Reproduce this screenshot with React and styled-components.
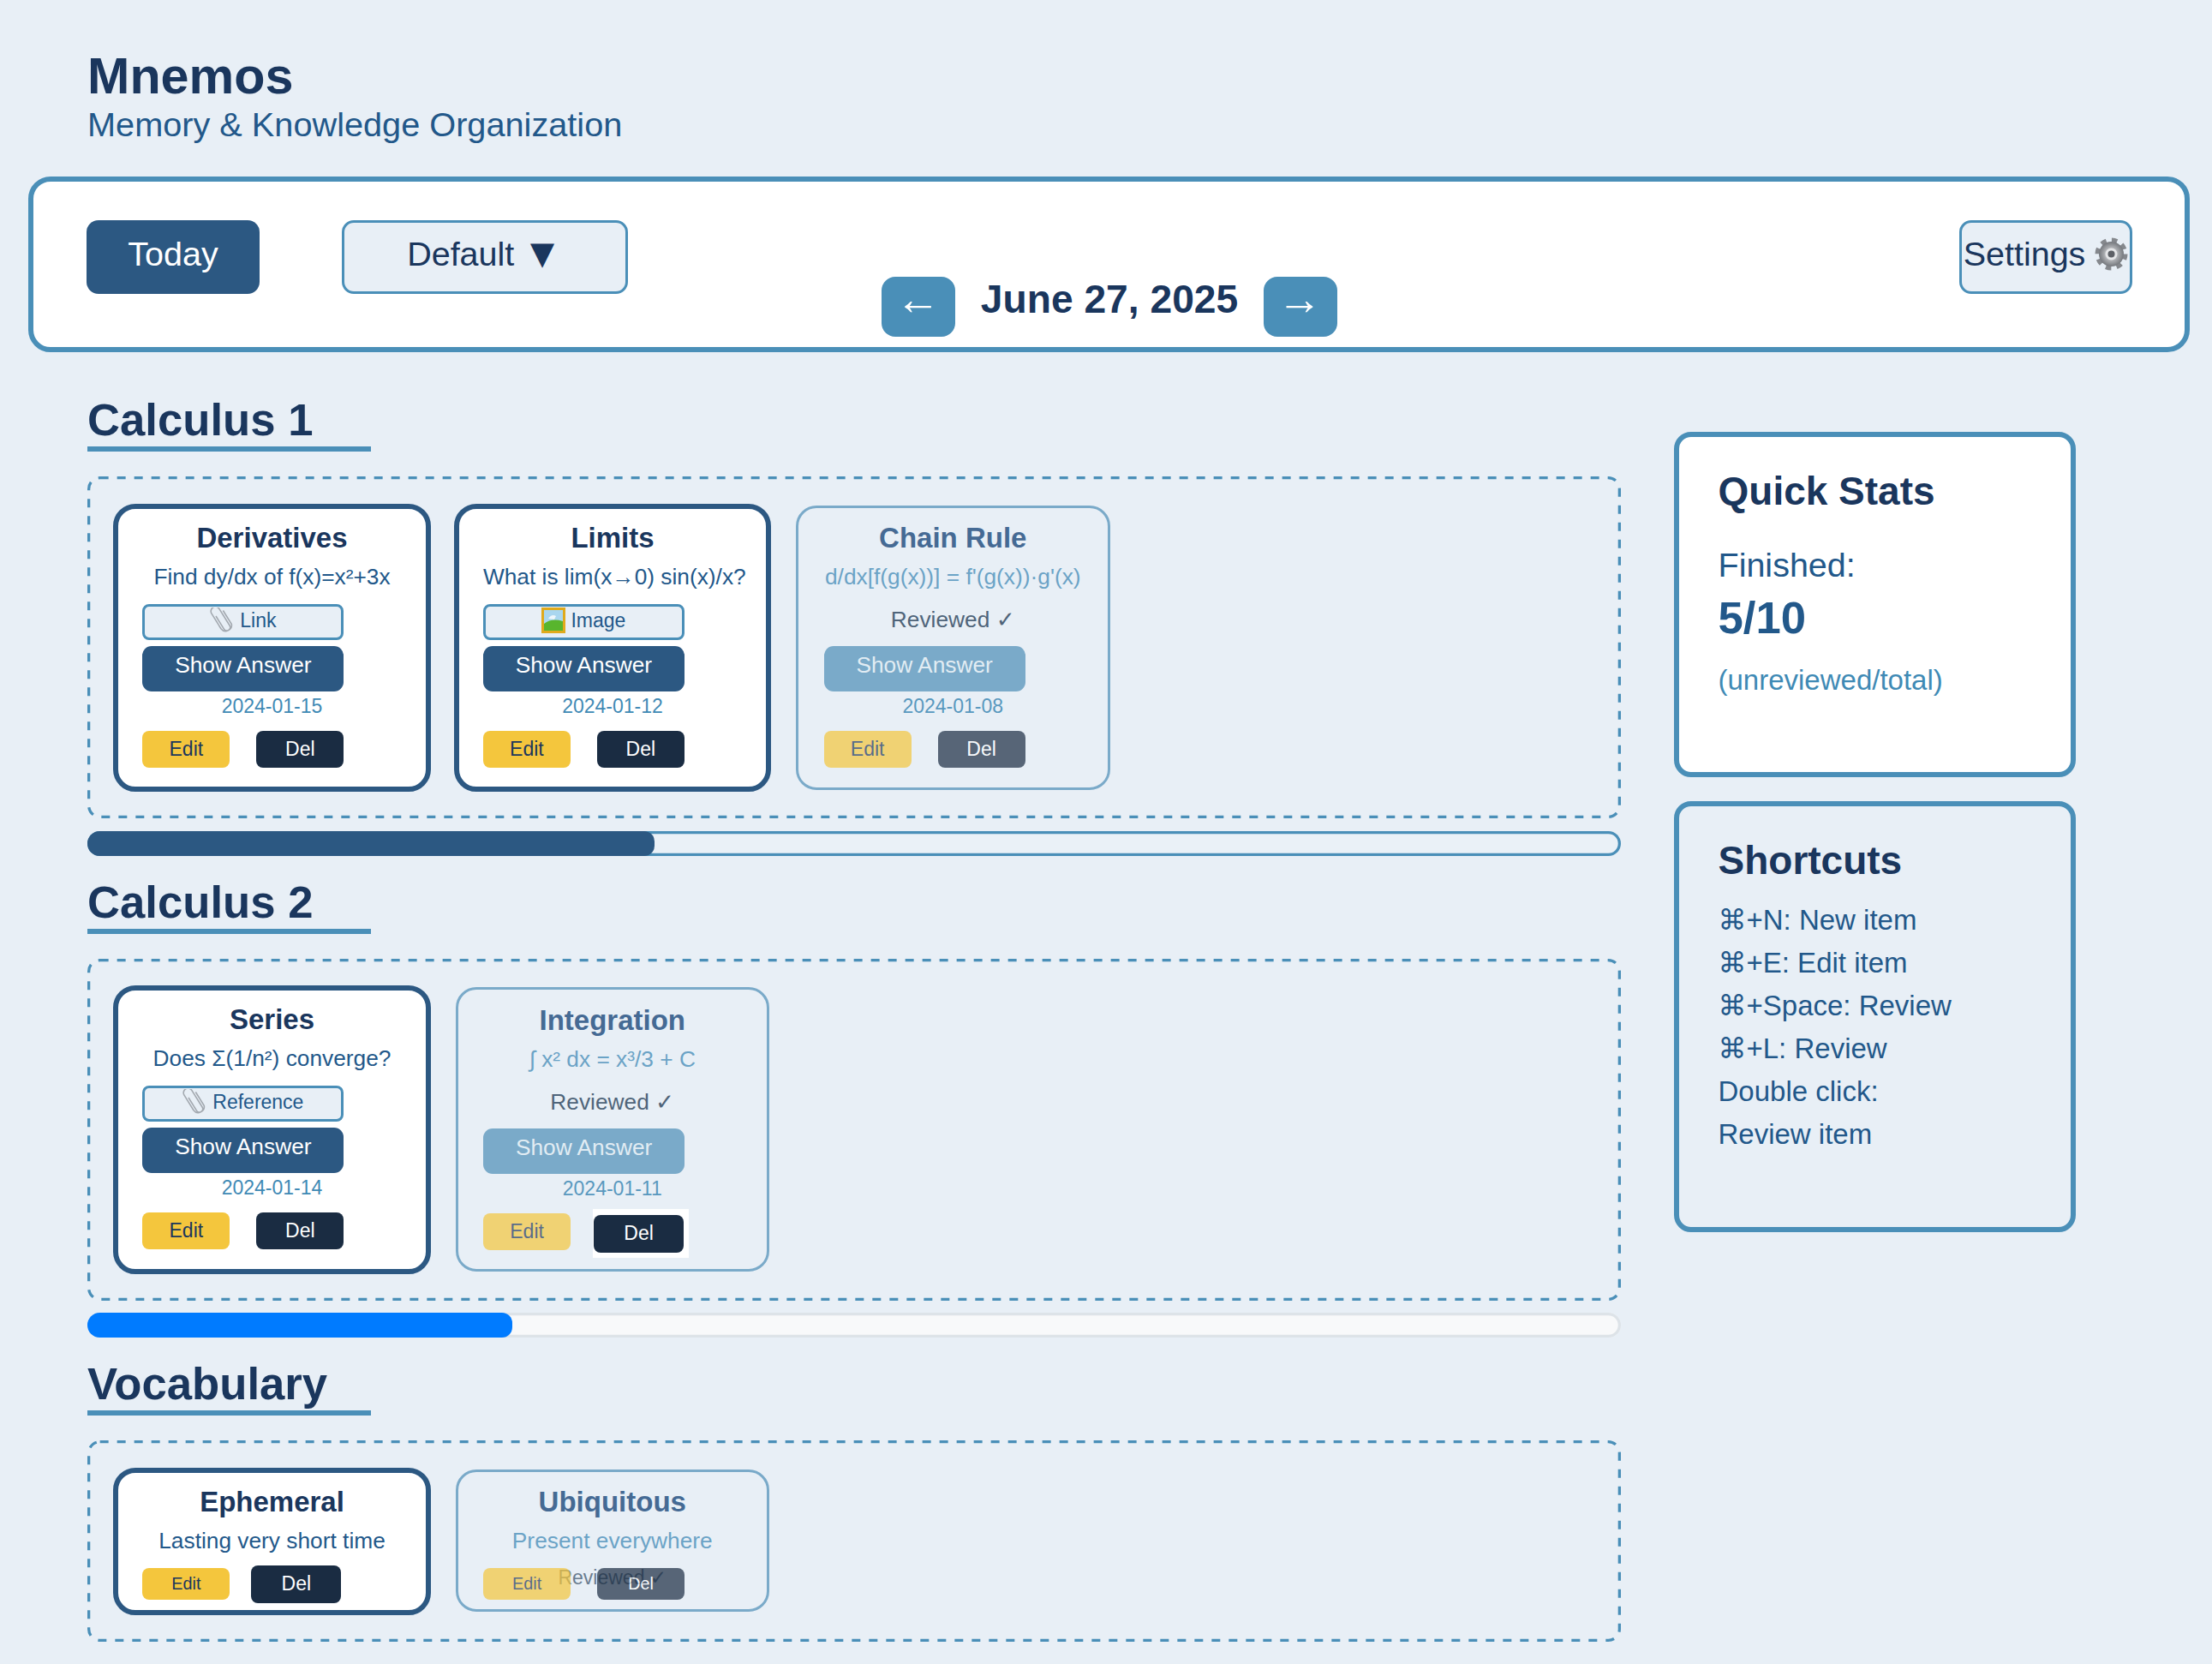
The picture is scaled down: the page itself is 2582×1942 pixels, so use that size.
import React from 'react';
import styled, { createGlobalStyle, css } from 'styled-components';

const GlobalStyle = createGlobalStyle`
  * { box-sizing: border-box; }
  html, body { margin: 0; padding: 0; background: #e8eff6; }
  body {
    font-family: "Liberation Sans", "DejaVu Sans", sans-serif;
    color: #1a365d;
  }
`;

const Page = styled.div`
  width: 2582px;
  height: 1942px;
  overflow: hidden;
  background: #e8eff6;
`;

const Header = styled.header`
  padding: 55px 0 0 102px;
`;
const Logo = styled.h1`
  margin: 0;
  font-size: 59.3px;
  line-height: 67px;
  font-weight: 700;
  color: #1a365d;
`;
const Tagline = styled.p`
  margin: 1px 0 38px;
  font-size: 39.7px;
  line-height: 45px;
  color: #22588a;
`;

const Toolbar = styled.nav`
  margin: 0 26px 0 33px;
  height: 205px;
  padding: 45px 61px 12px 62px;
  display: grid;
  grid-template-columns: 1fr auto 1fr;
  background: #fff;
  border: 6.6px solid #4a8fb8;
  border-radius: 26px;
`;
const ToolGroup = styled.div`
  display: flex;
  gap: 96px;
  align-items: flex-start;
  justify-content: ${p => (p.$end ? 'flex-end' : 'flex-start')};
`;
const ToolButton = styled.button`
  height: 86px;
  display: flex;
  align-items: center;
  justify-content: center;
  padding: 0 0 8px;
  font: inherit;
  font-size: 39.5px;
  border-radius: 14px;
`;
const TodayButton = styled(ToolButton)`
  width: 202px;
  color: #fff;
  background: #2c5882;
  border: 0;
`;
const OutlineButton = styled(ToolButton)`
  width: ${p => p.$width}px;
  gap: ${p => p.$gap || 0}px;
  color: #1a365d;
  background: #e8eff6;
  border: 3.3px solid #4a8fb8;
`;
const Caret = styled.span`
  margin-left: 9px;
  font-size: 48px;
  line-height: 1;
`;
const DateNav = styled.div`
  align-self: end;
  display: flex;
  align-items: flex-start;
  gap: 29.5px;
`;
const ArrowButton = styled.button`
  width: 86px;
  height: 70px;
  padding: 0 2px 20px 0;
  color: #fff;
  background: #4a8fb8;
  border: 0;
  border-radius: 16px;
  font: inherit;
  font-size: 52px;
  line-height: 1;
`;
const CurrentDate = styled.h2`
  margin: 0;
  font-size: 46.2px;
  line-height: 52px;
  font-weight: 700;
  color: #1a365d;
`;

const Layout = styled.div`
  display: flex;
  align-items: flex-start;
  gap: 62px;
  padding: 49px 0 0 102px;
`;
const Main = styled.main`
  width: 1790px;
  flex: none;
`;
const Section = styled.section`
  margin-bottom: 24px;
`;
const SectionTitle = styled.h2`
  width: 331px;
  margin: 0 0 29px;
  padding-bottom: 2px;
  border-bottom: 6.6px solid #4a8fb8;
  font-size: 52.7px;
  line-height: 59px;
  font-weight: 700;
  white-space: nowrap;
  color: #1a365d;
`;
const CardBox = styled.div`
  position: relative;
  display: flex;
  align-items: flex-start;
  gap: 31.5px;
  padding: 33.5px 32px 0;
  min-height: ${p => p.$minHeight}px;
`;
const DashFrame = styled.svg`
  position: absolute;
  inset: 0;
  width: 100%;
  height: 100%;
  pointer-events: none;
  rect {
    x: 1.65px;
    y: 1.65px;
    width: calc(100% - 3.3px);
    height: calc(100% - 3.3px);
    fill: none;
    stroke: #4a8fb8;
    stroke-width: 3.3px;
    stroke-dasharray: 10 10;
  }
`;

const CardTitle = styled.h3`
  margin: 0 0 11px;
  font-size: 33px;
  line-height: 38px;
  font-weight: 700;
  text-align: center;
  color: #1a365d;
`;
const Prompt = styled.p`
  margin: 0;
  font-size: 26.3px;
  line-height: 30px;
  text-align: center;
  white-space: nowrap;
  color: #22588a;
`;
const Attachment = styled.div`
  width: 235px;
  height: 42px;
  margin: 17px 0 7px;
  padding-bottom: 3px;
  display: flex;
  align-items: center;
  justify-content: center;
  gap: 6px;
  font-size: 23px;
  color: #22588a;
  background: #e8eff6;
  border: 3.3px solid #4a8fb8;
  border-radius: 8px;
`;
const ReviewedNote = styled.div`
  height: 42px;
  margin: 17px 0 7px;
  font-size: 26.3px;
  line-height: 36px;
  text-align: center;
  color: #3f566d;
`;
const FloatingNote = styled.div`
  position: absolute;
  left: 0;
  right: 0;
  top: 108px;
  font-size: 23px;
  line-height: 30px;
  text-align: center;
  color: #3f566d;
  opacity: 0.75;
`;
const ShowAnswer = styled.button`
  display: block;
  width: 235px;
  height: 53px;
  padding: 0 0 8px;
  font: inherit;
  font-size: 26.3px;
  color: #fff;
  background: #2c5882;
  border: 0;
  border-radius: 11px;
`;
const CreatedOn = styled.div`
  font-size: 23px;
  line-height: 30px;
  margin-top: 2px;
  text-align: center;
  color: #3f8ab5;
`;
const Actions = styled.div`
  position: relative;
  z-index: 1;
  display: flex;
  align-items: flex-start;
  gap: ${p => (p.$tight ? 25 : 31)}px;
  margin-top: ${p => (p.$compact ? 17 : 14)}px;
`;
const ActionButton = styled.button`
  width: 102px;
  height: ${p => (p.$small ? 37 : 43)}px;
  padding: 0;
  font: inherit;
  font-size: ${p => (p.$small ? 19.8 : 23)}px;
  border: 0;
  border-radius: 8px;
`;
const EditButton = styled(ActionButton)`
  color: #1a365d;
  background: #f4c63d;
`;
const DelButton = styled(ActionButton)`
  color: #fff;
  background: #1a2c42;
  ${p => p.$raised && css`
    width: 105px;
    height: 44px;
    margin-top: ${p.$offset || 0}px;
  `}
`;
const HoverPatch = styled.div`
  width: 112px;
  height: 57px;
  margin: -5px 0 -9px -5px;
  padding: 7px 0 0 1px;
  background: #fff;
`;

const Card = styled.article`
  position: relative;
  flex: none;
  border-style: solid;
  ${p => p.$reviewed ? css`
    width: 366.5px;
    padding: 16.5px 29.6px ${p.$compact ? 11 : 22.7}px;
    border-width: 3.3px;
    border-color: #7aaac9;
    border-radius: 24px;
    background: transparent;
    ${CardTitle} { color: #456a94; }
    ${Prompt} { color: #6ba3c6; }
    ${ShowAnswer} { background: #7aaac9; color: rgba(255, 255, 255, 0.8); }
    ${CreatedOn} { opacity: 0.85; }
    ${ReviewedNote} { opacity: 0.9; }
    ${EditButton}, ${DelButton} { opacity: 0.7; }
    ${HoverPatch} ${DelButton} { opacity: 1; }
  ` : css`
    width: 370.3px;
    margin: -1.65px -2.65px -1.65px -1.65px;
    padding: 14.85px 28px ${p.$compact ? 8 : 22.7}px;
    border-width: 6.6px;
    border-color: #2c5882;
    border-radius: 26px;
    background: #fff;
  `}
`;

const Track = styled.div`
  height: 29px;
  margin-top: 14.5px;
  overflow: hidden;
  border-radius: 15px;
  box-shadow: inset 0 0 0 3.3px ${p => (p.$plain ? '#dde3e8' : '#4a8fb8')};
  background: ${p => (p.$plain ? '#f8f9fa' : '#eaf1f7')};
`;
const Fill = styled.div`
  width: ${p => p.$value}%;
  height: 100%;
  border-radius: 0 12px 12px 0;
  background: ${p => p.$color};
`;

const Sidebar = styled.aside`
  width: 469px;
  flex: none;
  margin-top: 44px;
  display: flex;
  flex-direction: column;
  gap: 28px;
`;
const Panel = styled.div`
  height: ${p => p.$height}px;
  padding: 36.5px 44px 0 45.5px;
  background: ${p => (p.$white ? '#fff' : 'transparent')};
  border: 6.6px solid #4a8fb8;
  border-radius: 20px;
`;
const PanelTitle = styled.h3`
  margin: 0;
  font-size: 46px;
  line-height: 52px;
  font-weight: 700;
  color: #1a365d;
`;
const StatLabel = styled.div`
  margin-top: 37.5px;
  font-size: 39.5px;
  line-height: 46px;
  color: #22588a;
`;
const StatValue = styled.div`
  margin-top: 8.5px;
  font-size: 52.7px;
  line-height: 60px;
  font-weight: 700;
  color: #22588a;
`;
const StatHint = styled.div`
  margin-top: 24px;
  font-size: 33px;
  line-height: 38px;
  color: #3f8ab5;
`;
const ShortcutList = styled.ul`
  list-style: none;
  margin: 19.5px 0 0;
  padding: 0;
  font-size: 33px;
  line-height: 50px;
  color: #22588a;
`;

const ClipIcon = () => (
  <svg width="29" height="31" viewBox="4 2 21 27" fill="none" stroke="#a3a9b0" strokeWidth="1.4">
    <g transform="rotate(-32 14.5 15.5)">
      <path d="M11.5 8v15.5a3.4 3.4 0 0 0 6.8 0V3.6a4.6 4.6 0 0 0-9.2 0v18a6 6 0 0 0 11.6 1.6V7" />
    </g>
  </svg>
);

const FrameIcon = () => (
  <svg width="28" height="30" viewBox="0 0 28 30">
    <rect width="28" height="30" fill="#e0aa1c" />
    <rect x="3" y="3" width="22" height="24" fill="#a9d6ef" />
    <path d="M3 19q9-7 22-3v11H3z" fill="#58b52d" />
    <path d="M8 13q4-6 9-3l-2 4z" fill="#eef6fb" />
  </svg>
);

const GearIcon = () => (
  <svg width="39" height="39" viewBox="0 0 39 39">
    <defs>
      <radialGradient id="gearBody">
        <stop offset="0.35" stopColor="#c4c6c9" />
        <stop offset="1" stopColor="#74777c" />
      </radialGradient>
    </defs>
    <circle cx="19.5" cy="19.5" r="16.5" fill="none" stroke="#85888d" strokeWidth="5" strokeDasharray="6.5 6.45" />
    <circle cx="19.5" cy="19.5" r="14.5" fill="url(#gearBody)" />
    <circle cx="19.5" cy="19.5" r="7" fill="#e5e6e8" />
    <circle cx="19.5" cy="19.5" r="4" fill="#5d6066" />
  </svg>
);

const sections = [
  {
    title: 'Calculus 1',
    boxHeight: 399,
    progress: { value: 37, color: '#2c5882' },
    cards: [
      { title: 'Derivatives', prompt: 'Find dy/dx of f(x)=x²+3x', attachment: 'Link', icon: <ClipIcon />, date: '2024-01-15' },
      { title: 'Limits', prompt: 'What is lim(x→0) sin(x)/x?', attachment: 'Image', icon: <FrameIcon />, date: '2024-01-12' },
      { title: 'Chain Rule', prompt: "d/dx[f(g(x))] = f'(g(x))·g'(x)", reviewed: true, date: '2024-01-08' },
    ],
  },
  {
    title: 'Calculus 2',
    boxHeight: 399,
    progress: { value: 27.7, color: '#007bff', plain: true },
    cards: [
      { title: 'Series', prompt: 'Does Σ(1/n²) converge?', attachment: 'Reference', icon: <ClipIcon />, date: '2024-01-14' },
      { title: 'Integration', prompt: '∫ x² dx = x³/3 + C', reviewed: true, date: '2024-01-11', hoverDel: true },
    ],
  },
  {
    title: 'Vocabulary',
    boxHeight: 235,
    cards: [
      { title: 'Ephemeral', prompt: 'Lasting very short time', compact: true, bigDel: true },
      { title: 'Ubiquitous', prompt: 'Present everywhere', reviewed: true, compact: true },
    ],
  },
];

const shortcuts = ['⌘+N: New item', '⌘+E: Edit item', '⌘+Space: Review', '⌘+L: Review', 'Double click:', 'Review item'];

const ItemCard = ({ item }) => {
  const { title, prompt, attachment, icon, reviewed, date, compact, hoverDel, bigDel } = item;
  return (
    <Card $reviewed={reviewed} $compact={compact}>
      <CardTitle>{title}</CardTitle>
      <Prompt>{prompt}</Prompt>
      {attachment && <Attachment>{icon}<span>{attachment}</span></Attachment>}
      {reviewed && !compact && <ReviewedNote>Reviewed ✓</ReviewedNote>}
      {reviewed && compact && <FloatingNote>Reviewed ✓</FloatingNote>}
      {!compact && <ShowAnswer>Show Answer</ShowAnswer>}
      {date && <CreatedOn>{date}</CreatedOn>}
      <Actions $compact={compact} $tight={bigDel}>
        <EditButton $small={compact}>Edit</EditButton>
        {hoverDel ? (
          <HoverPatch><DelButton $raised>Del</DelButton></HoverPatch>
        ) : bigDel ? (
          <DelButton $raised $offset={-3}>Del</DelButton>
        ) : (
          <DelButton $small={compact}>Del</DelButton>
        )}
      </Actions>
    </Card>
  );
};

export default function App() {
  return (
    <Page>
      <GlobalStyle />
      <Header>
        <Logo>Mnemos</Logo>
        <Tagline>Memory &amp; Knowledge Organization</Tagline>
      </Header>
      <Toolbar>
        <ToolGroup>
          <TodayButton>Today</TodayButton>
          <OutlineButton $width={334}>Default<Caret>▼</Caret></OutlineButton>
        </ToolGroup>
        <DateNav>
          <ArrowButton>←</ArrowButton>
          <CurrentDate>June 27, 2025</CurrentDate>
          <ArrowButton>→</ArrowButton>
        </DateNav>
        <ToolGroup $end>
          <OutlineButton $width={202} $gap={11}>Settings <GearIcon /></OutlineButton>
        </ToolGroup>
      </Toolbar>
      <Layout>
        <Main>
          {sections.map(section => (
            <Section key={section.title}>
              <SectionTitle>{section.title}</SectionTitle>
              <CardBox $minHeight={section.boxHeight}>
                <DashFrame><rect rx="13" /></DashFrame>
                {section.cards.map(item => <ItemCard key={item.title} item={item} />)}
              </CardBox>
              {section.progress && (
                <Track $plain={section.progress.plain}>
                  <Fill $value={section.progress.value} $color={section.progress.color} />
                </Track>
              )}
            </Section>
          ))}
        </Main>
        <Sidebar>
          <Panel $white $height={403}>
            <PanelTitle>Quick Stats</PanelTitle>
            <StatLabel>Finished:</StatLabel>
            <StatValue>5/10</StatValue>
            <StatHint>(unreviewed/total)</StatHint>
          </Panel>
          <Panel $height={503}>
            <PanelTitle>Shortcuts</PanelTitle>
            <ShortcutList>
              {shortcuts.map(line => <li key={line}>{line}</li>)}
            </ShortcutList>
          </Panel>
        </Sidebar>
      </Layout>
    </Page>
  );
}
